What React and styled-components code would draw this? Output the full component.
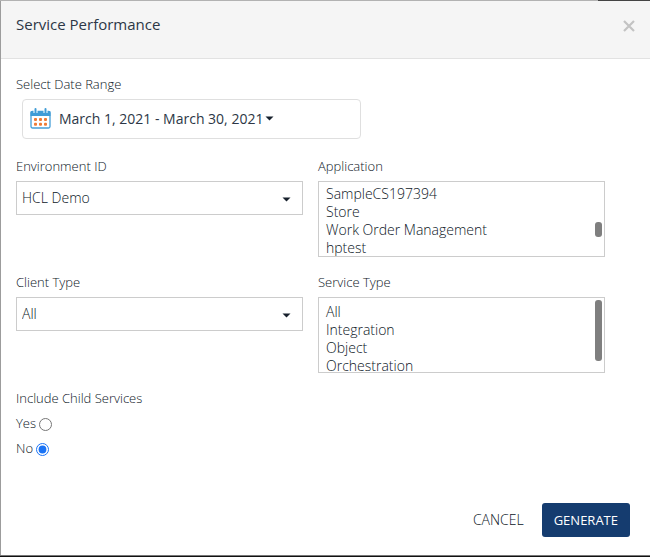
import React from "react";
import styled, { createGlobalStyle } from "styled-components";

const GlobalStyle = createGlobalStyle`
  *, *::before, *::after { box-sizing: border-box; }
  body {
    margin: 0;
    background: #fff;
    color: #0c1626;
    font: 300 14px/20px "Open Sans", "Noto Sans", sans-serif;
  }
  button, select, input { font: inherit; color: inherit; }
`;

const Backdrop = styled.div`
  display: flex;
  min-height: 100vh;
  padding: 1px 0 2px 1px;
  background:
    linear-gradient(#111, #111) bottom / 100% 1px no-repeat,
    linear-gradient(#777, #777) bottom / 100% 2px no-repeat,
    linear-gradient(to right, #b2b2b2 92%, #444 92%) top / 100% 1px no-repeat,
    #9c9c9c;
`;

const Dialog = styled.form`
  flex: 1;
  display: flex;
  flex-direction: column;
  background: #fff;
`;

const Header = styled.header`
  display: flex;
  justify-content: space-between;
  align-items: flex-start;
  height: 58px;
  padding: 13px 15px 0 15px;
  background: #f5f5f5;
  border-bottom: 1px solid #e2e2e2;
`;

const Title = styled.h1`
  margin: 0;
  font-size: 15px;
  line-height: 20px;
  font-weight: 400;
  color: #2c3746;
`;

const CloseButton = styled.button`
  display: flex;
  margin-top: 6px;
  padding: 0;
  border: 0;
  background: none;
  color: #c3c3c3;
`;

const Body = styled.div`
  display: flex;
  flex-direction: column;
  padding: 15px 45px 0 15px;
`;

const Label = styled.label`
  display: block;
  font-size: 13px;
  line-height: 20px;
  margin-bottom: 5px;
`;

const Legend = styled.legend`
  padding: 0;
  font-size: 13px;
  line-height: 20px;
`;

const DateButton = styled.button`
  display: flex;
  align-items: center;
  width: 58%;
  max-width: 339px;
  height: 40px;
  margin-left: 6px;
  padding: 0 7px 1px;
  border: 1px solid #dfdfdf;
  border-radius: 4px;
  background: #fff;
  font-weight: 400;
  color: #2c3746;
`;

const DateText = styled.span`
  margin: 0 2px 0 8px;
`;

const Fields = styled.div`
  display: grid;
  grid-template-columns: 1fr 1fr;
  gap: 15px;
  margin-top: 17px;
`;

const Control = styled.div`
  position: relative;
`;

const Dropdown = styled.select`
  display: block;
  width: 100%;
  height: 34px;
  padding: 0 24px 1px 5px;
  border: 1px solid #ccc;
  border-radius: 0;
  background: #fff;
  appearance: none;
`;

const DropdownCaret = styled.span`
  position: absolute;
  right: 12px;
  top: 16px;
  display: flex;
  pointer-events: none;
`;

const ListBox = styled.select`
  display: block;
  width: 100%;
  height: 76px;
  padding: ${(p) => p.$inset}px 5px 0;
  border: 1px solid #ccc;
  border-radius: 0;
  background: #fff;
  overflow: hidden;
  scrollbar-width: none;
  &::-webkit-scrollbar { display: none; }
  option {
    height: 18px;
    min-height: 18px;
    padding: 0 2px;
    font-weight: 300;
    line-height: 18px;
  }
`;

const ScrollThumb = styled.span`
  position: absolute;
  right: 3px;
  top: ${(p) => p.$top}px;
  width: 7px;
  height: ${(p) => p.$size}px;
  border-radius: 3px;
  background: #7f7f7f;
`;

const RadioGroup = styled.fieldset`
  margin: 15px 0 0;
  padding: 0;
  border: 0;
`;

const RadioLabel = styled.label`
  display: flex;
  align-items: center;
  gap: 3px;
  width: max-content;
  margin-top: 5px;
  font-size: 13px;
  line-height: 20px;
`;

const Radio = styled.input`
  width: 13px;
  height: 13px;
  margin: 2px 0 0;
  accent-color: #1a73f5;
`;

const Footer = styled.footer`
  display: flex;
  justify-content: flex-end;
  gap: 6px;
  margin-top: auto;
  padding: 0 20px 18px;
`;

const ActionButton = styled.button`
  height: 34px;
  padding: 0 12px;
  border: 0;
  border-radius: 3px;
  font-size: ${(p) => (p.$primary ? 13 : 14)}px;
  font-weight: ${(p) => (p.$primary ? 400 : 300)};
  background: ${(p) => (p.$primary ? "#153c6f" : "transparent")};
  color: ${(p) => (p.$primary ? "#fff" : "inherit")};
`;

function Caret() {
  return (
    <svg width="9" height="5" viewBox="0 0 9 5" aria-hidden="true">
      <path d="M0.5 0.5h8L4.5 4.5z" fill="#17202c" />
    </svg>
  );
}

function CalendarIcon() {
  return (
    <svg width="21" height="21" viewBox="0 0 21 21" aria-hidden="true">
      <rect x="1" y="3.5" width="19" height="16.5" rx="1.5" fill="#fff" stroke="#459fd8" strokeWidth="1.3" />
      <path d="M.5 8V4Q.5 3 1.5 3h18q1 0 1 1v4z" fill="#409cd6" />
      <path d="M5.5 0v5M15.5 0v5" stroke="#fff" strokeWidth="4" />
      <path d="M5.5 1v4M15.5 1v4" stroke="#409cd6" strokeWidth="2" strokeLinecap="round" />
      <g fill="#ef7b35">
        {[5.5, 10.5, 15.5].map((x) =>
          [11.5, 16.2].map((y) => <rect key={`${x}-${y}`} x={x - 1.5} y={y - 1.5} width="3" height="3" rx="1" />)
        )}
      </g>
    </svg>
  );
}

function DropdownField({ id, label, value }) {
  return (
    <div>
      <Label htmlFor={id}>{label}</Label>
      <Control>
        <Dropdown id={id} defaultValue={value}>
          <option>{value}</option>
        </Dropdown>
        <DropdownCaret><Caret /></DropdownCaret>
      </Control>
    </div>
  );
}

function ListField({ id, label, options, inset, thumbTop, thumbSize }) {
  return (
    <div>
      <Label htmlFor={id}>{label}</Label>
      <Control>
        <ListBox id={id} multiple size={4} $inset={inset}>
          {options.map((o) => <option key={o}>{o}</option>)}
        </ListBox>
        <ScrollThumb $top={thumbTop} $size={thumbSize} />
      </Control>
    </div>
  );
}

export default function App() {
  return (
    <>
      <GlobalStyle />
      <Backdrop>
        <Dialog onSubmit={(e) => e.preventDefault()}>
          <Header>
            <Title>Service Performance</Title>
            <CloseButton type="button" aria-label="Close">
              <svg width="12" height="12" viewBox="0 0 12 12" aria-hidden="true">
                <path d="M1 1l10 10M11 1L1 11" stroke="currentColor" strokeWidth="2.2" />
              </svg>
            </CloseButton>
          </Header>
          <Body>
            <Label htmlFor="range">Select Date Range</Label>
            <DateButton id="range" type="button">
              <CalendarIcon />
              <DateText>March 1, 2021 - March 30, 2021</DateText>
              <Caret />
            </DateButton>
            <Fields>
              <DropdownField id="environment" label="Environment ID" value="HCL Demo" />
              <ListField
                id="application"
                label="Application"
                options={["SampleCS197394", "Store", "Work Order Management", "hptest"]}
                inset={2}
                thumbTop={41}
                thumbSize={15}
              />
              <DropdownField id="client" label="Client Type" value="All" />
              <ListField
                id="service"
                label="Service Type"
                options={["All", "Integration", "Object", "Orchestration"]}
                inset={4}
                thumbTop={3}
                thumbSize={61}
              />
            </Fields>
            <RadioGroup>
              <Legend>Include Child Services</Legend>
              <RadioLabel>Yes <Radio type="radio" name="child" value="yes" /></RadioLabel>
              <RadioLabel>No <Radio type="radio" name="child" value="no" defaultChecked /></RadioLabel>
            </RadioGroup>
          </Body>
          <Footer>
            <ActionButton type="button">CANCEL</ActionButton>
            <ActionButton type="submit" $primary>GENERATE</ActionButton>
          </Footer>
        </Dialog>
      </Backdrop>
    </>
  );
}
